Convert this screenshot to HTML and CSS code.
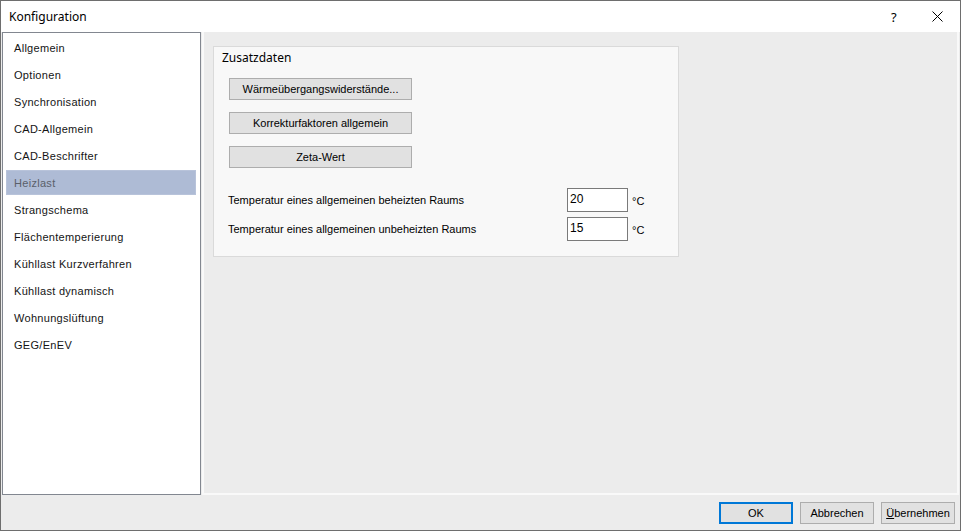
FILE: index.html
```html
<!DOCTYPE html>
<html lang="de">
<head>
<meta charset="utf-8">
<title>Konfiguration</title>
<link rel="stylesheet" href="styles.css">
</head>
<body>
<div class="window">
  <div class="titlebar">
    <span class="title">Konfiguration</span>
    <span class="help">?</span>
    <span class="close">
      <svg width="11" height="11" viewBox="0 0 11 11"><path d="M0.5 0.5 L10.5 10.5 M10.5 0.5 L0.5 10.5" stroke="#000" stroke-width="1" fill="none"/></svg>
    </span>
  </div>
  <div class="content">
    <ul class="nav">
      <li>Allgemein</li>
      <li>Optionen</li>
      <li>Synchronisation</li>
      <li>CAD-Allgemein</li>
      <li>CAD-Beschrifter</li>
      <li class="selected">Heizlast</li>
      <li>Strangschema</li>
      <li>Flächentemperierung</li>
      <li>Kühllast Kurzverfahren</li>
      <li>Kühllast dynamisch</li>
      <li>Wohnungslüftung</li>
      <li>GEG/EnEV</li>
    </ul>
    <div class="panel">
      <div class="group">
        <div class="group-title">Zusatzdaten</div>
        <div class="btn-col">
          <button class="btn">Wärmeübergangswiderstände...</button>
          <button class="btn">Korrekturfaktoren allgemein</button>
          <button class="btn">Zeta-Wert</button>
        </div>
        <div class="rows">
          <div class="row">
            <span class="label">Temperatur eines allgemeinen beheizten Raums</span>
            <span class="input">20</span>
            <span class="unit">°C</span>
          </div>
          <div class="row">
            <span class="label">Temperatur eines allgemeinen unbeheizten Raums</span>
            <span class="input">15</span>
            <span class="unit">°C</span>
          </div>
        </div>
      </div>
    </div>
  </div>
  <div class="footer">
    <button class="btn fbtn default">OK</button>
    <button class="btn fbtn">Abbrechen</button>
    <button class="btn fbtn"><u>Ü</u>bernehmen</button>
  </div>
</div>
</body>
</html>
```

FILE: styles.css
```css
* { box-sizing: border-box; }
html, body { margin: 0; padding: 0; background: #ececec; }
.window {
  width: 961px;
  height: 531px;
  border: 1px solid #6e6e6e;
  background: #ececec;
  display: flex;
  flex-direction: column;
  font-family: "Liberation Sans", Arial, sans-serif;
  font-size: 11px;
  color: #000;
}
.titlebar {
  height: 31px;
  flex: none;
  background: #fff;
  display: flex;
  align-items: center;
}
.title {
  margin-left: 8px;
  font-family: "Noto Sans", sans-serif;
  font-size: 12px;
  color: #000;
}
.help {
  margin-left: auto;
  font-family: "Noto Sans", sans-serif;
  font-size: 13px;
  width: 12px;
  margin-right: 29px;
  color: #000;
}
.close {
  width: 11px;
  height: 11px;
  margin-right: 17px;
  display: flex;
}
.content {
  height: 463px;
  flex: none;
  display: flex;
  padding: 0 1px 0 1px;
}
.nav {
  list-style: none;
  margin: 0;
  width: 199px;
  flex: none;
  background: #fff;
  border: 1px solid #828790;
  padding: 2px 0 0 0;
}
.nav li {
  height: 25px;
  margin: 0 4px 2px 3px;
  padding-left: 8px;
  display: flex;
  align-items: center;
  letter-spacing: 0.3px;
  color: #141414;
}
.nav li.selected {
  background: #aebbd5;
  color: #5a5f6a;
  box-shadow: inset 0 0 0 1px #b8c3da;
}
.panel {
  flex: 1;
  margin-left: 1px;
  border: 2px solid #f9f9f9;
  border-top: none;
  background: #ececec;
  padding: 14px 0 0 9px;
}
.group {
  width: 466px;
  height: 211px;
  background: #f8f8f8;
  border: 1px solid #dadada;
  padding: 3px 0 0 8px;
}
.group-title {
  font-family: "Noto Sans", sans-serif;
  font-size: 12px;
  line-height: 16px;
  color: #000;
}
.btn-col {
  display: flex;
  flex-direction: column;
  gap: 12px;
  margin: 12px 0 0 7px;
}
.btn {
  font-family: "Liberation Sans", Arial, sans-serif;
  font-size: 11px;
  color: #000;
  background: #e1e1e1;
  border: 1px solid #adadad;
  padding: 0;
  margin: 0;
  width: 183px;
  height: 22px;
  text-align: center;
}
.rows {
  margin: 20px 0 0 6px;
  display: flex;
  flex-direction: column;
  gap: 5px;
}
.row {
  display: flex;
  align-items: center;
  height: 24px;
}
.label {
  width: 339px;
  flex: none;
}
.input {
  width: 61px;
  height: 24px;
  background: #fff;
  border: 1px solid #7a7a7a;
  padding: 3px 0 0 2px;
  font-size: 12px;
  line-height: 14px;
  align-self: flex-start;
}
.unit {
  margin-left: 4px;
  padding-top: 2px;
}
.footer {
  flex: 1;
  display: flex;
  justify-content: flex-end;
  align-items: flex-start;
  padding: 7px 5px 0 0;
  gap: 7px;
}
.fbtn {
  width: 74px;
  height: 22px;
}
.fbtn.default {
  border: 2px solid #0078d7;
}
u { text-decoration: underline; }
```
